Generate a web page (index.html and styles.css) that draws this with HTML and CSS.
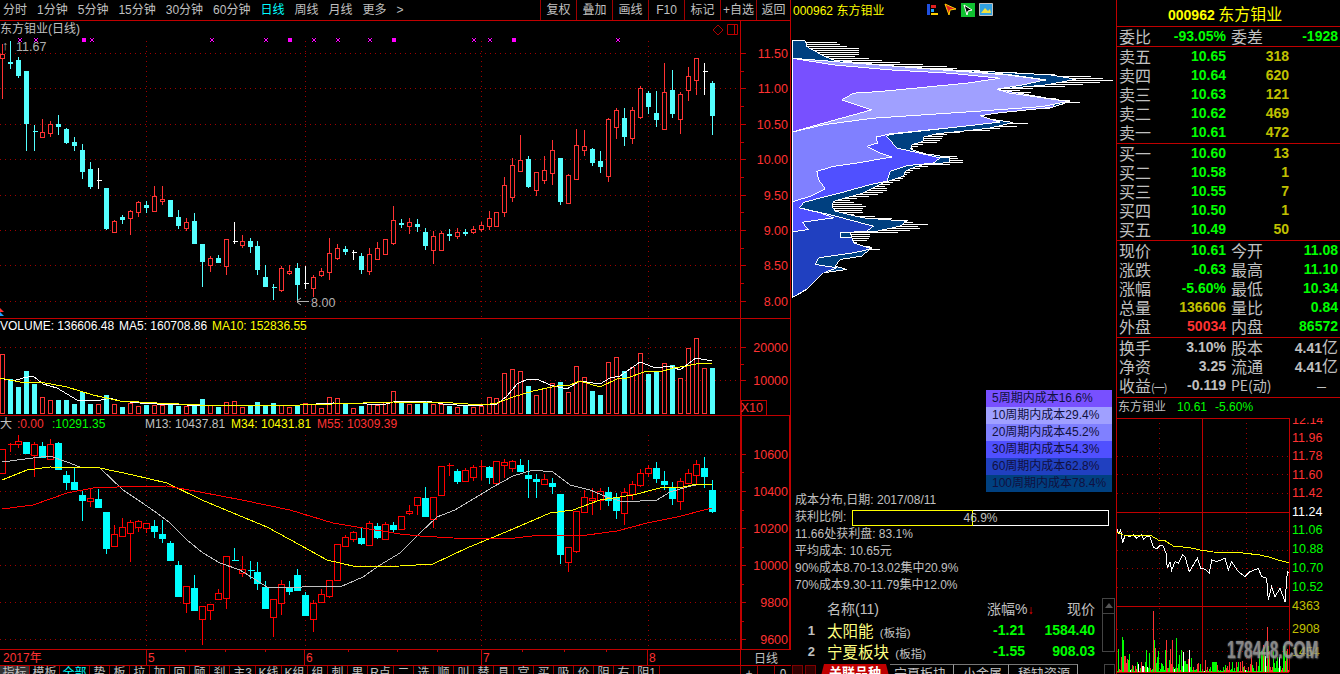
FILE: index.html
```html
<!DOCTYPE html>
<html lang="zh-CN">
<head>
  <meta charset="UTF-8" />
  <title>东方钼业 000962</title>
  <link rel="stylesheet" href="styles.css">
</head>
<body>
  <div class="main">
    <nav class="toolbar">
      <div class="periods">
        <span>分时</span><span>1分钟</span><span>5分钟</span><span>15分钟</span><span>30分钟</span><span>60分钟</span>
        <span class="active">日线</span><span>周线</span><span>月线</span><span>更多</span><span>&gt;</span>
      </div>
      <div class="tools">
        <span>复权</span><span>叠加</span><span>画线</span><span>F10</span><span>标记</span><span>+自选</span><span>返回</span>
      </div>
    </nav>

    <section class="panel panel-price">
      <div class="plot">
        <div class="panel-head">
          <span>东方钼业(日线)</span>
          <span class="head-icons">
            <svg width="12" height="12" viewBox="0 0 12 12"><path d="M6 1 L11 6 L6 11 L1 6 Z" fill="none" stroke="#b00000"/></svg>
            <svg width="11" height="11" viewBox="0 0 11 11"><path d="M.5 .5 H10.5 V10.5 H.5 Z M7.5 .5 V10.5" fill="none" stroke="#c00000"/></svg>
          </span>
        </div>
        <svg id="priceChart" class="chart" width="740" height="280" viewBox="0 38 740 280"></svg>
      </div>
      <svg id="priceAxis" class="axis" width="49" height="297" viewBox="741 21 49 297"></svg>
    </section>

    <section class="panel panel-volume">
      <div class="plot">
        <div class="panel-head">
          <span class="white vh1">VOLUME: 136606.48</span>
          <span class="white vh2">MA5: 160708.86</span>
          <span class="yellow">MA10: 152836.55</span>
        </div>
        <svg id="volumeChart" class="chart" width="740" height="81" viewBox="0 334 740 81"></svg>
      </div>
      <svg id="volumeAxis" class="axis" width="49" height="96" viewBox="741 319 49 96"></svg>
    </section>

    <section class="panel panel-index">
      <div class="plot">
        <div class="panel-head">
          <span class="gray head-first">大</span>
          <span class="red-text head-zero">:0.00</span>
          <span class="green head-ten">:10291.35</span>
          <span class="gray head-m">M13: 10437.81</span>
          <span class="yellow head-m">M34: 10431.81</span>
          <span class="red-text">M55: 10309.39</span>
        </div>
        <svg id="indexChart" class="chart" width="740" height="217" viewBox="0 432 740 217"></svg>
      </div>
      <svg id="indexAxis" class="axis" width="49" height="233" viewBox="741 416 49 233"></svg>
    </section>

    <div class="date-row">
      <svg id="dateAxis" width="740" height="15" viewBox="0 650 740 15"></svg>
      <span class="date-mode">日线</span>
    </div>

    <div class="tabs-row">
      <div class="formula-tabs">
        <span class="ft ft-2 ft-on">指标</span><span class="ft ft-2">模板</span><span class="ft ft-2 ft-cyan">全部</span>
        <span class="ft">势</span><span class="ft">板</span><span class="ft">拉</span><span class="ft">加</span><span class="ft">回</span><span class="ft">顾</span><span class="ft">刹</span>
        <span class="ft ft-3">主3</span><span class="ft ft-3">K线</span><span class="ft ft-3">K组</span>
        <span class="ft">组</span><span class="ft">刺</span><span class="ft">果</span><span class="ft ft-3">R点</span>
        <span class="ft">二</span><span class="ft">选</span><span class="ft">顺</span><span class="ft">叫</span><span class="ft">替</span><span class="ft">具</span><span class="ft">宫</span><span class="ft">买</span><span class="ft">吸</span><span class="ft">价</span><span class="ft">阴</span><span class="ft">右</span><span class="ft ft-3">阴1</span>
      </div>
      <div class="zoom-tabs"><span>+</span><span>-</span><span>0</span></div>
    </div>
  </div>

  <div class="chips">
    <div class="chips-head">
      <span class="chips-name">000962 东方钼业</span>
      <span class="chips-icons">
        <svg width="14" height="13" viewBox="0 0 14 13"><path d="M1 1 H4 V12 H1 Z" fill="#2050e0"/><path d="M5 2 H10 V5 H5 Z" fill="#e02020"/><path d="M5 6 H8 V9 H5 Z" fill="#20a0ff"/><path d="M5 10 H12 V12 H5 Z" fill="#ffd000"/></svg>
        <svg width="13" height="13" viewBox="0 0 13 13"><path d="M1 1 L12 6 L6 7 L5 12 Z" fill="#e02020" stroke="#ffd000"/></svg>
        <svg width="14" height="14" viewBox="0 0 14 14"><path d="M0 0 H14 V14 H0 Z" fill="#10c030"/><path d="M3 2 L11 7 L7 8 L6 12 Z" fill="#000" stroke="#fff"/></svg>
        <svg width="14" height="13" viewBox="0 0 14 13"><path d="M.5 .5 H13.5 V12.5 H.5 Z" fill="#30a0e0" stroke="#c0c0c0"/><path d="M2 10 L6 5 L9 8 L11 6 L12 10 Z" fill="#f0e040"/></svg>
      </span>
    </div>
    <svg id="chipChart" class="chip-chart" width="325" height="371" viewBox="791 20 325 371"></svg>

    <div class="legend">
      <div class="legend-row l5">5周期内成本16.6%</div>
      <div class="legend-row l10">10周期内成本29.4%</div>
      <div class="legend-row l20">20周期内成本45.2%</div>
      <div class="legend-row l30">30周期内成本54.3%</div>
      <div class="legend-row l60">60周期内成本62.8%</div>
      <div class="legend-row l100">100周期内成本78.4%</div>
    </div>

    <div class="info">
      <div>成本分布,日期: 2017/08/11</div>
      <div class="profit-row">
        <span class="profit-label">获利比例:</span>
        <div class="profit-bar"><div class="profit-fill"></div><span class="profit-text">46.9%</span></div>
      </div>
      <div>11.66处获利盘: 83.1%</div>
      <div>平均成本: 10.65元</div>
      <div>90%成本8.70-13.02集中20.9%</div>
      <div>70%成本9.30-11.79集中12.0%</div>
    </div>

    <div class="related">
      <div class="related-list">
        <div class="related-row related-head">
          <span></span><span>名称(11)</span><span class="num">涨幅%<b class="sort-arrow">↓</b></span><span class="num">现价</span>
        </div>
        <div class="related-row">
          <span class="rank">1</span><span class="name">太阳能 <small>(板指)</small></span><span class="num up">-1.21</span><span class="num up">1584.40</span>
        </div>
        <div class="related-row">
          <span class="rank">2</span><span class="name">宁夏板块 <small>(板指)</small></span><span class="num up">-1.55</span><span class="num up">908.03</span>
        </div>
      </div>
      <div class="scrollbar"><div class="scroll-btn"></div></div>
    </div>

    <div class="chip-tabs">
      <span class="arrows"><i></i><i></i></span>
      <span class="ct ct-on">关联品种</span><span class="ct">宁夏板块</span><span class="ct ct-small">小金属</span><span class="ct ct-rare">稀缺资源</span>
      <span class="ct-end"></span>
    </div>
  </div>

  <aside class="quote">
    <div class="quote-title"><b>000962</b> 东方钼业</div>

    <div class="section section-ratio">
      <div class="row"><span>委比</span><span class="num up">-93.05%</span><span class="l2">委差</span><span class="num up">-1928</span></div>
    </div>

    <div class="section">
      <div class="row book"><span>卖五</span><span class="num up">10.65</span><span class="num vol">318</span></div>
      <div class="row book"><span>卖四</span><span class="num up">10.64</span><span class="num vol">620</span></div>
      <div class="row book"><span>卖三</span><span class="num up">10.63</span><span class="num vol">121</span></div>
      <div class="row book"><span>卖二</span><span class="num up">10.62</span><span class="num vol">469</span></div>
      <div class="row book"><span>卖一</span><span class="num up">10.61</span><span class="num vol">472</span></div>
    </div>

    <div class="section">
      <div class="row book"><span>买一</span><span class="num up">10.60</span><span class="num vol">13</span></div>
      <div class="row book"><span>买二</span><span class="num up">10.58</span><span class="num vol">1</span></div>
      <div class="row book"><span>买三</span><span class="num up">10.55</span><span class="num vol">7</span></div>
      <div class="row book"><span>买四</span><span class="num up">10.50</span><span class="num vol">1</span></div>
      <div class="row book"><span>买五</span><span class="num up">10.49</span><span class="num vol">50</span></div>
    </div>

    <div class="section">
      <div class="row"><span>现价</span><span class="num up">10.61</span><span class="l2">今开</span><span class="num up">11.08</span></div>
      <div class="row"><span>涨跌</span><span class="num up">-0.63</span><span class="l2">最高</span><span class="num up">11.10</span></div>
      <div class="row"><span>涨幅</span><span class="num up">-5.60%</span><span class="l2">最低</span><span class="num up">10.34</span></div>
      <div class="row"><span>总量</span><span class="num vol">136606</span><span class="l2">量比</span><span class="num up">0.84</span></div>
      <div class="row"><span>外盘</span><span class="num hot">50034</span><span class="l2">内盘</span><span class="num up">86572</span></div>
    </div>

    <div class="section section-last">
      <div class="row"><span>换手</span><span class="num plain">3.10%</span><span class="l2">股本</span><span class="num plain">4.41<em>亿</em></span></div>
      <div class="row"><span>净资</span><span class="num plain">3.25</span><span class="l2">流通</span><span class="num plain">4.41<em>亿</em></span></div>
      <div class="row"><span>收益<i class="tight">(一)</i></span><span class="num plain">-0.119</span><span class="l2 pe">PE(动)</span><span class="num plain"><span class="dash">—</span></span></div>
    </div>

    <div class="mini-title"><span>东方钼业</span><span class="green">10.61</span><span class="green">-5.60%</span></div>
    <div class="mini">
      <svg id="miniChart" width="223" height="256" viewBox="1117 418 223 256"></svg>
      <span class="watermark">178448.COM</span>
    </div>
  </aside>

  <script src="charts.js"></script>
</body>
</html>
```

FILE: styles.css
```css
* {
  box-sizing: border-box;
  margin: 0;
  padding: 0;
}

body {
  width: 1340px;
  height: 674px;
  overflow: hidden;
  display: flex;
  background: #000;
  color: #c0c0c0;
  font-family: "Noto Sans CJK SC", "Liberation Sans", sans-serif;
  font-size: 12px;
}

svg {
  display: block;
}

.white { color: #fff; }
.yellow { color: #ffff00; }
.gray { color: #c0c0c0; }
.green { color: #00ff00; }
.red-text { color: #ff3232; }

/* left column */
.main {
  width: 791px;
  flex-shrink: 0;
  display: flex;
  flex-direction: column;
}

.toolbar {
  height: 21px;
  display: flex;
  justify-content: space-between;
  border-bottom: 1px solid #c00000;
  line-height: 20px;
  font-family: "Liberation Sans", "Noto Sans CJK SC", sans-serif;
}

.periods {
  display: flex;
  gap: 10px;
  padding-left: 3px;
}

.periods .active {
  color: #00ffff;
}

.tools {
  display: flex;
}

.tools span {
  width: 36px;
  text-align: center;
  border-left: 1px solid #a00000;
}

.tools span:last-child {
  width: 35px;
  border-right: 1px solid #c00000;
}

.panel {
  display: flex;
  border-bottom: 1px solid #c00000;
}

.panel-price { height: 298px; }
.panel-volume { height: 97px; }
.panel-index { height: 234px; }

.plot {
  width: 741px;
  border-right: 1px solid #c00000;
}

.axis {
  box-sizing: content-box;
  border-right: 1px solid #c00000;
}

.panel-head {
  height: 17px;
  display: flex;
  line-height: 17px;
  white-space: nowrap;
  font-family: "Liberation Sans", "Noto Sans CJK SC", sans-serif;
}

.panel-price .panel-head {
  justify-content: space-between;
}

.head-icons {
  display: flex;
  align-items: center;
  gap: 3px;
  padding-right: 2px;
}

.panel-volume .panel-head {
  height: 15px;
  line-height: 15px;
}

.panel-index .panel-head {
  height: 16px;
  line-height: 16px;
}

.vh1 { width: 119px; }
.vh2 { width: 93px; }
.head-first { width: 17px; }
.head-zero { width: 35px; }
.head-ten { width: 93px; }
.head-m { width: 86px; }

.axis-label {
  font-family: "Liberation Sans", sans-serif;
  font-size: 12.5px;
  fill: #ff3232;
  text-anchor: end;
}

.chart-note {
  font-family: "Liberation Sans", sans-serif;
  font-size: 12.5px;
  fill: #b0b0b0;
}

.date-label {
  font-family: "Liberation Sans", "Noto Sans CJK SC", sans-serif;
  font-size: 12px;
  fill: #ff3232;
}

.date-row {
  height: 16px;
  display: flex;
  border-bottom: 1px solid #c00000;
}

.date-mode {
  width: 51px;
  text-align: center;
  line-height: 15px;
  border-left: 1px solid #c00000;
}

.tabs-row {
  height: 9px;
  display: flex;
  justify-content: space-between;
}

.formula-tabs {
  display: flex;
  line-height: 14px;
}

.ft {
  width: 20px;
  height: 14px;
  text-align: center;
  border-right: 1px solid #a00000;
  font-family: "Liberation Sans", "Noto Sans CJK SC", sans-serif;
}

.ft-2 { width: 30px; }
.ft-3 { width: 26px; }
.ft-on { background: #333; }
.ft-cyan { color: #00ffff; }

.zoom-tabs {
  width: 51px;
  display: flex;
  line-height: 14px;
}

.zoom-tabs span {
  flex: 1;
  text-align: center;
  border-left: 1px solid #a00000;
}

/* chip distribution column */
.chips {
  width: 325px;
  flex-shrink: 0;
  display: flex;
  flex-direction: column;
}

.chips-head {
  height: 20px;
  padding-left: 2px;
  display: flex;
  gap: 41px;
  align-items: center;
}

.chips-name {
  color: #ffff00;
  font-family: "Liberation Sans", "Noto Sans CJK SC", sans-serif;
  white-space: nowrap;
  width: 92px;
}

.chips-icons {
  display: flex;
  gap: 4px;
  align-items: center;
}

.legend {
  width: 126px;
  margin-left: auto;
  margin-right: 4px;
  color: #101040;
  font-family: "Liberation Sans", "Noto Sans CJK SC", sans-serif;
}

.legend-row {
  height: 17px;
  line-height: 17px;
  padding-left: 6px;
  white-space: nowrap;
}

.l5 { background: #7850ff; }
.l10 { background: #a0a0ff; }
.l20 { background: #8080ff; }
.l30 { background: #5050ff; }
.l60 { background: #2040c0; }
.l100 { background: #004080; }

.info {
  padding-left: 4px;
  line-height: 17px;
  font-family: "Liberation Sans", "Noto Sans CJK SC", sans-serif;
}

.profit-row {
  display: flex;
}

.profit-label {
  width: 57px;
  flex-shrink: 0;
}

.profit-bar {
  width: 257px;
  height: 16px;
  margin-top: 1px;
  border: 1px solid #fff;
  line-height: 14px;
  text-align: center;
  position: relative;
}

.profit-fill {
  position: absolute;
  left: -1px;
  top: -1px;
  width: 121px;
  height: 16px;
  border: 1px solid #ffff00;
}

.profit-text {
  position: relative;
}

.related {
  height: 70px;
  margin-top: 3px;
  display: flex;
  justify-content: space-between;
}

.related-list {
  flex: 1;
}

.related-row {
  height: 21px;
  display: grid;
  grid-template-columns: 36px 160px 38px 70px;
  align-items: center;
  white-space: nowrap;
  font-family: "Liberation Sans", "Noto Sans CJK SC", sans-serif;
}

.related-head {
  height: 22px;
  font-size: 14px;
}

.related-row .num {
  text-align: right;
}

.related-head .num {
  font-weight: normal;
}

.sort-arrow {
  color: #ff0000;
  font-weight: normal;
  font-size: 12px;
  margin-right: -4px;
}

.rank {
  text-align: right;
  padding-right: 12px;
  font-weight: bold;
  font-size: 13px;
}

.name {
  color: #ffff80;
  font-size: 15.5px;
}

.name small {
  color: #c0c0c0;
  font-size: 11.5px;
  margin-left: 2px;
}

.up {
  color: #00ff00;
  font-weight: bold;
  font-size: 14px;
}

.scrollbar {
  width: 13px;
  height: 54px;
  margin-top: 1px;
  margin-right: 1px;
  border: 1px solid #444;
}

.scroll-btn {
  height: 15px;
  border-bottom: 1px solid #444;
  position: relative;
}

.scroll-btn::after {
  content: "";
  position: absolute;
  left: 2px;
  top: 4px;
  border-left: 4px solid transparent;
  border-right: 4px solid transparent;
  border-bottom: 5px solid #555;
}

.chip-tabs {
  height: 10px;
  margin-top: -3px;
  display: flex;
  line-height: 15px;
  font-size: 13px;
}

.arrows {
  width: 29px;
  display: flex;
  gap: 2px;
  padding: 1px 0 0 1px;
}

.arrows i {
  width: 11px;
  height: 11px;
  background: #300000;
  border: 1px solid #800000;
}

.ct {
  height: 16px;
  padding: 0 7px 0 4px;
  border-top: 1px solid #777;
  border-right: 1px solid #999;
}

.ct-on {
  width: 70px;
  padding: 0;
  text-align: center;
  font-weight: bold;
  background: #c00000;
  color: #fff;
  border: 0;
  clip-path: polygon(4px 0, 66px 0, 70px 100%, 0 100%);
}

.ct-small { padding-left: 9px; padding-right: 6px; }
.ct-rare { padding-left: 9px; }

.ct-end {
  width: 11px;
  height: 12px;
  margin-left: auto;
  margin-right: 1px;
  border: 1px solid #444;
}

/* quote column */
.quote {
  flex: 1;
  display: flex;
  flex-direction: column;
  border-left: 1px solid #c00000;
}

.quote-title {
  height: 27px;
  padding-left: 51px;
  color: #ffff00;
  font-size: 16px;
  line-height: 26px;
  border-bottom: 1px solid #c00000;
  white-space: nowrap;
}

.quote-title b {
  font-family: "Liberation Sans", sans-serif;
  font-size: 14px;
}

.section {
  padding-bottom: 1px;
  border-bottom: 1px solid #c00000;
}

.section-ratio {
  padding-bottom: 0;
}

.section-last {
  height: 60px;
}

.row {
  height: 19px;
  padding-left: 2px;
  display: grid;
  grid-template-columns: 34px 73px 39px 73px;
  font-size: 16px;
  line-height: 19px;
  white-space: nowrap;
}

.book {
  grid-template-columns: 34px 73px 63px;
}

.l2 {
  padding-left: 5px;
}

.pe {
  font-size: 14px;
}

.tight {
  font-style: normal;
  font-size: 11px;
  letter-spacing: -1px;
}

.dash {
  padding-right: 12px;
  font-size: 9px;
}

.num {
  text-align: right;
  font-family: "Liberation Sans", "Noto Sans CJK SC", sans-serif;
  font-size: 14px;
  font-weight: bold;
}

.num em {
  font-style: normal;
  font-weight: normal;
  font-size: 16px;
}

.vol { color: #c0c000; }
.hot { color: #ff3232; }
.plain { color: #c0c0c0; }

.mini-title {
  height: 20px;
  padding-left: 1px;
  display: flex;
  gap: 11px;
  line-height: 19px;
  font-family: "Liberation Sans", "Noto Sans CJK SC", sans-serif;
}

.mini-title span:last-child {
  margin-left: -3px;
}

.mini {
  position: relative;
  height: 256px;
}

.watermark {
  position: absolute;
  left: 110px;
  top: 220px;
  color: #a0a0a0;
  font-family: "Liberation Sans", sans-serif;
  font-size: 24px;
  line-height: 24px;
  font-weight: bold;
  opacity: 0.85;
  text-shadow: 0 0 2px #666, 1px 1px 2px #666;
  white-space: nowrap;
  transform: scaleX(0.64);
  transform-origin: left center;
}
```

FILE: charts.js
```js
var DOT = '#a00000';
var LINE = '#c00000';

// bars are 8px apart, the whole row slips one pixel left twice
function candleX(i) {
  return 8 * i + (i < 32 ? 2 : i < 62 ? 1 : 0);
}

function line(x1, y1, x2, y2, color, dash) {
  return '<line x1="' + x1 + '" y1="' + y1 + '" x2="' + x2 + '" y2="' + y2 + '" stroke="' + color + '"' +
    (dash ? ' stroke-dasharray="1 4"' : '') + ' shape-rendering="crispEdges"/>';
}

function poly(points, color) {
  return '<polyline points="' + points.map(function (p) { return p.join(','); }).join(' ') +
    '" fill="none" stroke="' + color + '" stroke-width="1" shape-rendering="crispEdges"/>';
}

function label(x, y, text, cls) {
  return '<text x="' + x + '" y="' + y + '" class="' + (cls || 'axis-label') + '">' + text + '</text>';
}

// [colour, high, bodyTop, bodyBottom, low] in page pixels
function drawCandles(rows, red, cyan, width) {
  var half = (width - 1) / 2;
  var out = '';
  rows.forEach(function (r, i) {
    var x = candleX(i) + 0.5;
    var color = r[0] === 'r' ? red : r[0] === 'c' ? cyan : '#fff';
    out += line(x, r[1], x, r[4], color);
    if (r[2] === r[3]) {
      out += line(x - half, r[2] + 0.5, x + half + 1, r[2] + 0.5, color);
    } else if (r[0] === 'r') {
      out += '<rect x="' + (x - half) + '" y="' + (r[2] + 0.5) + '" width="' + (width - 1) + '" height="' + (r[3] - r[2]) +
        '" fill="#000" stroke="' + red + '" shape-rendering="crispEdges"/>';
    } else {
      out += '<rect x="' + (x - half - 0.5) + '" y="' + r[2] + '" width="' + width + '" height="' + (r[3] - r[2]) +
        '" fill="' + color + '" shape-rendering="crispEdges"/>';
    }
  });
  return out;
}

function grid(ys, xs, top, bottom) {
  var out = '';
  ys.forEach(function (y) { out += line(0, y + 0.5, 740, y + 0.5, DOT, true); });
  xs.forEach(function (x) { out += line(x + 0.5, top, x + 0.5, bottom, DOT, true); });
  return out;
}

function axis(ticks, names, minor) {
  var out = '';
  ticks.forEach(function (y, i) {
    out += line(741, y + 0.5, 746, y + 0.5, LINE);
    out += label(788, y + 5, names[i]);
  });
  minor.forEach(function (y) { out += line(741, y + 0.5, 744, y + 0.5, LINE); });
  return out;
}

function pixel(x, y, size) {
  return '<rect x="' + x + '" y="' + y + '" width="' + size + '" height="' + size + '" fill="#ff00ff"/>';
}

// small x on the even grid; the bold ones carry a solid centre
function marker(x, bold) {
  var out = '';
  for (var d = 0; d < 4; d++) {
    out += pixel(x - 2 + d, 38 + d, 1) + pixel(x + 1 - d, 38 + d, 1);
  }
  return out + (bold ? pixel(x - 1, 39, 2) + pixel(x - 2, 38, 2) + pixel(x, 38, 2) + pixel(x - 2, 40, 2) + pixel(x, 40, 2) : '');
}

var VERTICALS = [146, 305, 481, 648];

var priceRows = [
  ['r',44,54,58,99],['c',41,62,64,69],['c',57,60,76,78],['c',71,71,124,151],['c',125,131,131,151],
  ['r',119,132,137,137],['r',121,124,133,137],['c',115,124,127,135],['c',128,129,143,144],['c',137,142,146,151],
  ['c',144,150,172,179],['c',162,169,187,189],['w',168,180,180,189],['c',188,188,229,230],['r',220,221,232,232],
  ['c',215,217,220,224],['r',210,211,218,235],['r',201,202,212,217],['c',201,205,208,213],['r',186,196,211,211],
  ['r',186,199,201,205],['c',200,200,217,217],['c',210,217,226,229],['r',218,222,228,231],['c',213,221,244,244],
  ['c',244,244,262,287],['r',256,258,265,272],['c',255,258,263,263],['r',239,239,266,275],['w',222,241,241,244],
  ['r',235,241,245,248],['c',238,241,247,253],['c',241,246,270,275],['c',265,277,287,287],['c',284,287,287,300],
  ['r',266,268,290,292],['r',265,271,273,275],['c',263,268,285,301],['w',266,283,283,289],['r',275,277,288,297],
  ['r',268,271,275,277],['r',238,253,272,280],['r',244,248,258,260],['c',246,249,252,255],['w',250,252,252,260],
  ['c',253,256,270,274],['r',248,254,271,275],['r',242,248,259,259],['r',239,239,254,254],['r',206,220,243,245],
  ['c',219,223,225,228],['r',218,222,226,234],['c',219,224,227,232],['c',228,232,246,250],['r',231,236,250,264],
  ['r',231,233,250,250],['c',229,234,236,241],['r',228,232,236,239],['c',229,232,234,236],['r',226,229,232,234],
  ['r',222,225,229,232],['r',211,218,226,230],['r',212,212,226,226],['r',177,185,212,217],['r',158,165,197,202],
  ['r',135,160,171,172],['c',156,159,187,188],['r',172,172,190,196],['r',156,170,180,184],['r',140,150,173,185],
  ['c',158,158,202,205],['r',174,175,203,204],['r',129,145,179,180],['r',130,146,150,156],['c',148,149,163,166],
  ['c',151,161,167,173],['r',118,119,176,182],['r',108,110,127,139],['c',108,118,137,146],['r',107,110,138,144],
  ['r',86,88,117,119],['c',91,93,107,114],['c',91,113,120,127],['r',63,92,129,129],['c',70,90,114,118],
  ['r',92,94,119,134],['r',67,76,90,101],['r',58,58,80,95],['w',63,71,71,95],['c',81,83,116,135]
];

var volumeTops = [
  354,379,387,371,384,397,400,400,400,404,392,404,404,395,404,407,403,406,405,405,405,405,406,406,406,399,405,407,402,401,
  407,405,402,405,403,405,407,405,403,404,408,397,398,403,408,406,404,405,402,391,402,404,404,401,404,404,406,407,406,407,
  406,397,398,373,369,371,386,395,388,383,382,392,366,377,391,395,362,357,371,367,353,374,372,363,365,378,348,338,368,368
];

var indexRows = [
  ['r',449,449,473,473],['r',443,444,444,452],['r',435,441,444,448],['c',442,442,454,454],['r',442,444,455,477],
  ['c',442,446,458,458],['r',439,444,459,459],['c',442,443,470,470],['c',471,475,483,490],['c',468,482,490,490],
  ['c',490,495,501,521],['r',489,498,501,507],['c',489,499,508,508],['c',512,512,549,554],['r',525,534,546,546],
  ['r',518,527,536,536],['r',520,522,533,562],['r',520,521,527,532],['r',523,523,528,533],['c',520,526,532,538],
  ['c',520,534,539,543],['c',541,543,561,561],['c',561,565,597,597],['r',586,586,603,613],['c',575,588,611,611],
  ['r',606,606,619,645],['r',604,604,610,620],['r',589,593,599,599],['r',556,556,598,609],['c',548,560,560,561],
  ['r',556,569,573,577],['c',561,570,570,579],['c',562,572,584,590],['c',581,587,609,609],['r',599,599,617,637],
  ['r',580,584,603,615],['c',581,587,592,595],['c',569,575,591,591],['c',592,595,616,616],['r',600,603,619,632],
  ['r',589,594,602,603],['r',580,580,596,598],['r',544,544,580,580],['r',535,537,546,546],['r',531,532,539,542],
  ['c',528,538,544,545],['r',521,523,545,546],['c',523,526,538,539],['r',522,524,539,540],['c',522,525,530,532],
  ['r',516,516,529,529],['r',505,511,513,515],['r',497,497,505,515],['c',487,498,517,517],['r',497,497,519,528],
  ['r',466,466,495,495],['r',463,465,465,476],['c',469,471,482,484],['r',468,470,481,481],['r',465,467,477,481],
  ['r',460,466,466,480],['c',466,467,478,484],['r',461,461,483,483],['r',459,462,465,478],['r',460,461,468,472],
  ['c',459,465,472,472],['c',460,475,479,498],['c',474,479,482,498],['r',474,479,484,484],['c',478,483,487,494],
  ['c',494,494,555,564],['r',547,547,562,572],['r',511,511,551,553],['r',490,497,512,513],['r',488,498,500,515],
  ['r',488,491,500,510],['c',487,492,501,506],['c',493,497,511,519],['r',488,492,513,525],['r',481,484,494,500],
  ['r',469,473,485,487],['r',465,468,473,477],['c',462,468,479,483],['c',471,481,485,490],['c',482,487,499,505],
  ['r',478,481,501,510],['r',469,473,483,483],['r',460,464,475,485],['c',457,468,477,488],['c',480,490,512,513]
];

var vol5 = [[0,378],[13,381],[23,378],[33,376],[43,384],[57,388],[77,400],[97,401],[110,398],[120,401],[140,403],[157,404],[187,405],[217,405],[300,405],[333,403],[367,404],[383,405],[393,402],[427,401],[443,404],[470,406],[483,405],[497,404],[507,396],[517,384],[528,379],[537,379],[550,385],[567,389],[580,381],[600,384],[610,378],[620,376],[640,362],[653,367],[663,367],[670,366],[680,370],[696,358],[712,361]];
var vol10 = [[0,378],[20,382],[40,382],[67,387],[93,395],[120,401],[157,403],[200,405],[300,405],[333,404],[393,402],[453,403],[483,405],[497,403],[513,397],[533,391],[557,386],[570,385],[580,381],[600,387],[617,379],[627,378],[647,371],[660,372],[673,368],[687,366],[700,363],[712,363]];

var m13 = [[2,462],[33,458],[50,456],[67,462],[80,467],[100,468],[123,490],[138,500],[157,513],[170,523],[187,540],[203,553],[220,563],[240,570],[267,587],[277,588],[327,586],[340,587],[363,577],[380,565],[400,553],[420,533],[437,517],[455,510],[493,487],[513,476],[533,470],[553,472],[570,485],[590,490],[607,497],[623,502],[657,500],[670,492],[687,487],[700,484],[712,485]];
var m34 = [[2,480],[27,470],[50,467],[100,468],[133,475],[167,483],[202,500],[233,513],[267,527],[300,545],[327,560],[357,567],[400,566],[433,564],[467,548],[513,529],[550,513],[573,510],[600,500],[633,495],[660,488],[683,487],[697,484],[712,485]];
var m55 = [[2,509],[33,505],[67,493],[93,488],[117,487],[167,486],[200,492],[242,500],[290,510],[333,523],[363,528],[400,534],[420,536],[453,538],[507,539],[540,535],[587,535],[617,531],[647,523],[677,517],[712,508]];

// price panel
var priceYs = [53, 88, 124, 159, 195, 230, 265, 301];
var out = grid(priceYs, VERTICALS, 41, 318);
[[20,0],[36,0],[84,1],[92,0],[212,0],[266,0],[290,1],[314,0],[338,0],[370,0],[394,1],[474,0],[490,0],[514,1],[618,0]].forEach(function (m) {
  out += marker(m[0], m[1]);
});
out += drawCandles(priceRows, '#ff3232', '#54ffff', 5);
out += label(2, 50, '↑', 'chart-note') + label(16, 51, '11.67', 'chart-note');
out += line(297, 301.5, 309, 301.5, '#b0b0b0') + '<path d="M297 301 l4 -3 M297 302 l4 3" stroke="#b0b0b0"/>';
out += label(311, 307, '8.00', 'chart-note');
out += '<path d="M0 308 L4 312 H0 Z" fill="#ff3232"/><path d="M0 312 L4 316 H0 Z" fill="#20a0ff"/>';
document.getElementById('priceChart').innerHTML = out;
document.getElementById('priceAxis').innerHTML = axis(priceYs,
  ['11.50', '11.00', '10.50', '10.00', '9.50', '9.00', '8.50', '8.00'],
  [71, 106, 142, 177, 212, 248, 283]);

// volume panel
out = grid([347, 380], VERTICALS, 338, 415);
volumeTops.forEach(function (barTop, i) {
  var x = candleX(i) + 0.5;
  if (priceRows[i][0] === 'c') {
    out += '<rect x="' + (x - 2.5) + '" y="' + barTop + '" width="5" height="' + (414 - barTop) + '" fill="#54ffff"/>';
  } else {
    out += '<rect x="' + (x - 2) + '" y="' + (barTop + 0.5) + '" width="4" height="' + (413 - barTop) + '" fill="#000" stroke="#ff3232" shape-rendering="crispEdges"/>';
  }
});
out += poly(vol5, '#fff') + poly(vol10, '#ffff00');
document.getElementById('volumeChart').innerHTML = out;
out = axis([347, 380], ['20000', '10000'], [364]);
out += '<rect x="741.5" y="400.5" width="25" height="15" fill="#000" stroke="#c00000"/>';
out += label(763, 412, 'X10');
document.getElementById('volumeAxis').innerHTML = out;

// index panel
var indexYs = [454, 491, 528, 565, 602, 639];
out = grid(indexYs, VERTICALS, 435, 649);
out += drawCandles(indexRows, '#ff0000', '#00ffff', 7);
out += poly(m13, '#c0c0c0') + poly(m34, '#ffff00') + poly(m55, '#ff0000');
document.getElementById('indexChart').innerHTML = out;
out = axis(indexYs, ['10600', '10400', '10200', '10000', '9800', '9600'], [472, 510, 547, 584, 621]);
out += '<rect x="741" y="416" width="1" height="233" fill="#c00000"/><rect x="789" y="416" width="1" height="233" fill="#c00000"/>';
document.getElementById('indexAxis').innerHTML = out;

// date row
out = '';
[[146, '5'], [304, '6'], [481, '7'], [647, '8']].forEach(function (d) {
  out += line(d[0] + 0.5, 650, d[0] + 0.5, 665, LINE) + label(d[0] + 2, 662, d[1], 'date-label');
});
out += label(3, 662, '2017年', 'date-label');
[185, 225, 265, 348, 397, 437, 522, 564, 606].forEach(function (x) {
  out += line(x + 0.5, 650, x + 0.5, 652, LINE);
});
document.getElementById('dateAxis').innerHTML = out;

// chip distribution, traced at 3x from x=790 y=30
function chip(p) { return [790 + p[0] / 3, 30 + p[1] / 3]; }
var spikes = [[35,140],[41,150],[47,170],[53,205],[59,205],[65,205],[71,205],[77,195],[83,235],[89,275],[95,330],[101,400],[107,470],[113,500],[119,570],[125,680],[131,795],[137,905],[143,940],[149,970],[155,930],[161,880],[167,825],[173,730],[179,690],[185,725],[191,710],[197,685],[203,800],[209,840],[215,870],[221,820],[227,800],[233,780],[239,640],[280,715],[287,680],[293,630],[300,600],[306,510],[312,470],[318,460],[324,455],[330,450],[336,440],[342,400],[348,385],[354,370],[360,375],[366,400],[372,420],[378,500],[384,505],[390,520],[396,520],[402,480],[408,415],[414,390],[420,370],[426,360],[432,350],[438,345],[444,340],[450,330],[456,310],[462,300],[468,285],[474,290],[480,290],[486,280],[492,265],[498,235],[504,200],[510,180],[516,190],[522,215],[528,228],[534,218],[540,215],[546,218],[552,190],[558,255],[564,305],[570,355],[576,370],[582,415],[588,385],[594,390],[600,360],[606,325],[612,240],[618,240],[624,235],[630,230],[636,200],[642,205],[648,240],[654,245],[660,270]];

var shared = [[5,85],[480,122],[650,133],[770,150],[620,178],[800,210],[790,232],[620,250],[570,258],[600,268],[630,277],[500,292]];
var below30 = [[300,314],[290,320],[320,355],[380,368],[450,385],[430,400],[350,408],[300,425],[290,455],[240,465],[150,490],[40,518],[28,535]];
var layers = [
  ['#004080', [[5,33],[45,33],[50,50],[100,78],[130,90],[200,98],[330,110],[480,120],[650,128],[780,135],[860,148],[770,165],[660,175],[620,178],[660,195],[790,208],[840,215],[780,235],[640,240],[560,262],[670,278],[600,295],[510,305],[440,312],[400,322],[400,335],[365,345],[362,358],[400,372],[450,378],[450,383],[480,385],[478,398],[440,402],[410,402],[375,412],[345,425],[340,440],[280,460],[220,490],[130,515],[125,530],[135,545],[220,565],[350,575],[330,590],[260,605],[180,610],[190,640],[240,658],[215,680],[150,690],[135,710],[170,720],[100,730],[50,780],[5,805]]],
  ['#2040c0', shared.concat(below30, [[130,558],[250,590],[230,605],[150,610],[150,625],[185,625],[190,640],[245,658],[190,670],[85,685],[75,705],[140,715],[100,730],[55,775],[5,805]])],
  ['#5050ff', shared.concat(below30, [[90,550],[130,565],[35,578],[55,600],[5,607]])],
  ['#8080ff', shared.concat([[300,312],[258,322],[262,340],[230,350],[270,370],[305,382],[200,400],[130,410],[80,425],[85,450],[105,478],[60,500],[5,517]])],
  ['#a0a0ff', [[5,85],[480,122],[650,135],[765,150],[700,165],[620,178],[660,190],[800,210],[835,215],[760,230],[580,243],[250,265],[100,285],[5,307]]],
  ['#7850ff', [[5,85],[130,105],[300,120],[480,130],[630,145],[530,160],[270,185],[190,190],[155,210],[245,240],[100,280],[5,307]]]
];
out = '';
spikes.forEach(function (s) {
  var y = Math.round(30 + s[0] / 3) + 0.5;
  out += line(792, y, 790 + s[1] / 3, y, '#fff');
});
layers.forEach(function (l) {
  out += '<polygon points="' + l[1].map(function (p) { return chip(p).join(','); }).join(' ') +
    '" fill="' + l[0] + '" stroke="#fff" stroke-width="1" shape-rendering="crispEdges"/>';
});
document.getElementById('chipChart').innerHTML = out;

// intraday mini chart, traced at 3x from x=1110 y=440
function mini(p) { return [1110 + p[0] / 3, 440 + p[1] / 3]; }
var tick = [[20,265],[25,280],[32,270],[38,310],[45,285],[60,290],[70,285],[80,295],[95,283],[100,298],[110,290],[120,290],[130,322],[140,326],[150,316],[160,318],[168,340],[172,385],[180,365],[185,390],[195,365],[205,370],[218,345],[225,350],[238,395],[250,375],[262,355],[272,385],[285,388],[298,400],[305,360],[320,365],[345,355],[355,390],[365,365],[385,395],[405,410],[420,395],[445,385],[455,410],[470,415],[475,480],[485,440],[495,470],[510,445],[525,485],[532,395],[538,400]];
var avg = [[20,275],[40,285],[125,288],[145,300],[165,302],[190,318],[240,323],[270,330],[310,336],[390,338],[450,345],[480,352],[510,362],[538,368]];

out = '';
[456, 474, 493, 531, 550, 568, 587, 629, 651].forEach(function (y) { out += line(1117, y + 0.5, 1289, y + 0.5, DOT, true); });
[1159, 1246].forEach(function (x) { out += line(x + 0.5, 418, x + 0.5, 672, DOT, true); });
[418, 512, 606, 672].forEach(function (y) { out += line(1117, y + 0.5, 1289, y + 0.5, LINE); });
[1202, 1289].forEach(function (x) { out += line(x + 0.5, 418, x + 0.5, 672, LINE); });

var miniPeaks = { 1122: 637, 1123: 640, 1153: 611, 1154: 640, 1166: 640, 1172: 640, 1176: 638, 1189: 650, 1267: 627, 1268: 646, 1179: 655, 1251: 655 };
var seed = 7;
for (var bar = 1117; bar < 1289; bar++) {
  seed = (seed * 16807) % 2147483647;
  var r = seed / 2147483647;
  var r2 = (seed % 100) / 100;
  var busy = bar > 1258 || bar < 1130 || (bar > 1145 && bar < 1192);
  var barTop = miniPeaks[bar] || (672 - Math.round(1 + r * r * (busy ? 26 : 11)));
  var barColor = r2 < 0.58 ? '#00ff00' : r2 < 0.9 ? '#ff3232' : '#fff';
  out += line(bar + 0.5, barTop, bar + 0.5, 672, barColor);
}
out += poly(tick.map(mini), '#fff') + poly(avg.map(mini), '#ffff00');

[
  ['12.14', 424, '#ff3232'], ['11.96', 442, '#ff3232'], ['11.78', 460, '#ff3232'], ['11.60', 479, '#ff3232'],
  ['11.42', 497, '#ff3232'], ['11.24', 516, '#fff'], ['11.06', 534, '#00ff00'], ['10.88', 553, '#00ff00'],
  ['10.70', 572, '#00ff00'], ['10.52', 591, '#00ff00'], ['4363', 610, '#c0c000'], ['2908', 633, '#c0c000'], ['1454', 656, '#c0c000']
].forEach(function (m) {
  out += '<text x="1292" y="' + m[1] + '" class="chart-note" style="fill:' + m[2] + '">' + m[0] + '</text>';
});
document.getElementById('miniChart').innerHTML = out;
```
